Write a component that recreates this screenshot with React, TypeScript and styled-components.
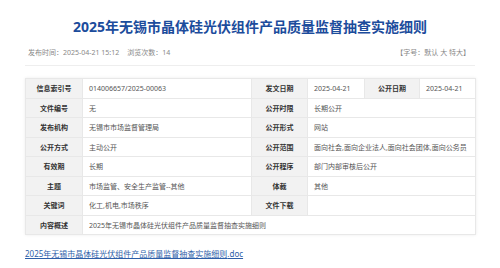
import * as React from 'react'
import styled, { createGlobalStyle } from 'styled-components'

const GlobalStyle = createGlobalStyle`
    html, body {
        margin: 0;
        padding: 0;
        background: #fff;
    }
    body {
        font-family: "Noto Sans", "Noto Sans CJK SC", sans-serif;
        color: #333;
    }
`

const Page = styled.div`
    width: 450px;
    margin: 0 auto;
    padding-top: 17px;
`

const Title = styled.h1`
    margin: 0;
    font-size: 14px;
    line-height: 20px;
    font-weight: 700;
    text-align: center;
    color: #1c4c9c;
`

const Meta = styled.div`
    display: flex;
    justify-content: space-between;
    align-items: center;
    margin-top: 10px;
    padding: 0 5px 6px 3px;
    height: 12px;
    font-size: 7px;
    line-height: 12px;
    color: #888;
    border-bottom: 1px solid #eee;
`

const MetaLeft = styled.div`
    display: flex;
    gap: 8px;
`

const Table = styled.table`
    margin-top: 12px;
    width: 450px;
    table-layout: fixed;
    border-collapse: collapse;
    font-size: 7px;
    box-shadow: 0 0 3px rgba(0, 0, 0, 0.08);
`

const Label = styled.th`
    height: 18.5px;
    padding: 0;
    background: #f2f2f2;
    border: 1px solid #e8e8e8;
    font-weight: 700;
    color: #333;
    text-align: center;
    white-space: nowrap;
`

const Value = styled.td`
    height: 18.5px;
    padding: 0 6px;
    background: #fff;
    border: 1px solid #e8e8e8;
    color: #555;
    text-align: left;
    white-space: nowrap;
    overflow: hidden;
`

const DocLink = styled.a`
    display: inline-block;
    margin-top: 13px;
    font-size: 8px;
    line-height: 12px;
    color: #2d5ea8;
    text-decoration: underline;
`

const title = '2025年无锡市晶体硅光伏组件产品质量监督抽查实施细则'

export default function App() {
    return (
        <>
            <GlobalStyle />
            <Page>
                <Title>{title}</Title>
                <Meta>
                    <MetaLeft>
                        <span>发布时间：2025-04-21 15:12</span>
                        <span>浏览次数：14</span>
                    </MetaLeft>
                    <span>【字号：默认 大 特大】</span>
                </Meta>
                <Table>
                    <colgroup>
                        <col style={{ width: 57 }} />
                        <col style={{ width: 169 }} />
                        <col style={{ width: 56 }} />
                        <col style={{ width: 57 }} />
                        <col style={{ width: 55 }} />
                        <col style={{ width: 56 }} />
                    </colgroup>
                    <tbody>
                        <tr>
                            <Label>信息索引号</Label>
                            <Value>014006657/2025-00063</Value>
                            <Label>发文日期</Label>
                            <Value>2025-04-21</Value>
                            <Label>公开日期</Label>
                            <Value>2025-04-21</Value>
                        </tr>
                        <tr>
                            <Label>文件编号</Label>
                            <Value>无</Value>
                            <Label>公开时限</Label>
                            <Value colSpan={3}>长期公开</Value>
                        </tr>
                        <tr>
                            <Label>发布机构</Label>
                            <Value>无锡市市场监督管理局</Value>
                            <Label>公开形式</Label>
                            <Value colSpan={3}>网站</Value>
                        </tr>
                        <tr>
                            <Label>公开方式</Label>
                            <Value>主动公开</Value>
                            <Label>公开范围</Label>
                            <Value colSpan={3}>面向社会,面向企业法人,面向社会团体,面向公务员</Value>
                        </tr>
                        <tr>
                            <Label>有效期</Label>
                            <Value>长期</Value>
                            <Label>公开程序</Label>
                            <Value colSpan={3}>部门内部审核后公开</Value>
                        </tr>
                        <tr>
                            <Label>主题</Label>
                            <Value>市场监管、安全生产监管--其他</Value>
                            <Label>体裁</Label>
                            <Value colSpan={3}>其他</Value>
                        </tr>
                        <tr>
                            <Label>关键词</Label>
                            <Value>化工,机电,市场秩序</Value>
                            <Label>文件下载</Label>
                            <Value colSpan={3}></Value>
                        </tr>
                        <tr>
                            <Label>内容概述</Label>
                            <Value colSpan={5}>{title}</Value>
                        </tr>
                    </tbody>
                </Table>
                <DocLink href="#">{title}.doc</DocLink>
            </Page>
        </>
    )
}
